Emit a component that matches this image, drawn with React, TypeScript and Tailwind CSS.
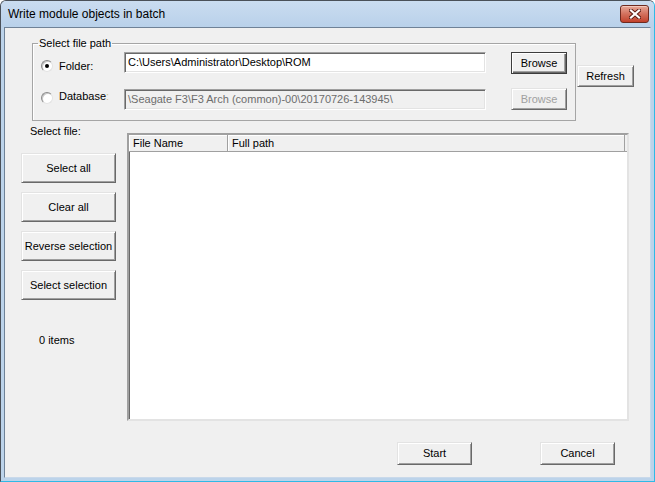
import type { ReactNode } from 'react'

function Btn({
  children,
  className = '',
  primary = false,
  disabled = false,
}: {
  children: ReactNode
  className?: string
  primary?: boolean
  disabled?: boolean
}) {
  const edge = primary
    ? 'border border-[#3c3c3c] shadow-[inset_1px_1px_0_#fff,inset_-1px_-1px_0_#696969,inset_-2px_-2px_0_#a0a0a0]'
    : 'border border-t-[#e3e3e3] border-l-[#e3e3e3] border-r-[#696969] border-b-[#696969] shadow-[inset_1px_1px_0_#fff,inset_-1px_-1px_0_#a0a0a0]'
  return (
    <button
      className={`flex items-center justify-center bg-[#f0f0f0] leading-none ${edge} ${
        disabled ? 'text-[#a0a0a0]' : 'text-black'
      } ${className}`}
    >
      {children}
    </button>
  )
}

function Radio({ checked = false }: { checked?: boolean }) {
  return (
    <span className="flex h-[12px] w-[12px] shrink-0 items-center justify-center rounded-full border border-t-[#8a8a8a] border-l-[#8a8a8a] border-r-[#e3e3e3] border-b-[#e3e3e3] bg-white shadow-[inset_1px_1px_0_#c8c8c8]">
      {checked && <span className="h-[4px] w-[4px] rounded-full bg-black" />}
    </span>
  )
}

function TextBox({ value, disabled = false }: { value: string; disabled?: boolean }) {
  return (
    <div
      className={`flex h-[21px] w-[362px] items-center border border-t-[#a0a0a0] border-l-[#a0a0a0] border-r-white border-b-white px-[3px] shadow-[inset_1px_1px_0_#696969,inset_-1px_-1px_0_#e3e3e3] ${
        disabled ? 'bg-[#f0f0f0] text-[#6d6d6d]' : 'bg-white text-black'
      }`}
    >
      <span className="whitespace-nowrap">{value}</span>
    </div>
  )
}

function CloseIcon() {
  return (
    <svg width="12" height="10" viewBox="0 0 12 10">
      <path d="M2 1.5 L10 8.5 M10 1.5 L2 8.5" stroke="#5a1a12" strokeWidth="4" strokeLinecap="square" />
      <path d="M2 1.5 L10 8.5 M10 1.5 L2 8.5" stroke="#fff" strokeWidth="2.2" strokeLinecap="square" />
    </svg>
  )
}

export default function App() {
  const sideButtons = ['Select all', 'Clear all', 'Reverse selection', 'Select selection']

  return (
    <div className="flex h-[482px] w-[655px] flex-col rounded-t-[6px] border border-[#4a5058] border-r-[#2fb9e6] border-b-[#2fb9e6] bg-[#bcd3ea] font-['Liberation_Sans',Arial,sans-serif] text-[11px] text-black">
      {/* Title bar */}
      <div className="flex h-[26px] items-center rounded-t-[5px] bg-gradient-to-b from-[#cadcf0] to-[#b9d1ea] pl-[7px] pr-[5px]">
        <span className="flex-1 text-[12px] leading-none">Write module objects in batch</span>
        <button className="flex h-[18px] w-[29px] items-center justify-center rounded-[3px] border border-[#6e2a20] bg-gradient-to-b from-[#e6a899] via-[#d3705d] to-[#c2412b] shadow-[inset_0_1px_0_#f4c9bd]">
          <CloseIcon />
        </button>
      </div>

      {/* Client area */}
      <div className="mx-[3px] mb-[3px] flex flex-1 flex-col border border-[#6f8297] border-r-[#c9d9ea] border-b-[#c9d9ea] bg-[#f0f0f0]">
        {/* Path selection */}
        <div className="ml-[27px] mt-[9px] flex items-start">
          <fieldset className="w-[544px] border border-[#a5a5a5] px-0 pb-[10px] pt-0 shadow-[inset_1px_1px_0_#fff]">
            <legend className="ml-[5px] px-[1px] leading-[13px]">Select file path</legend>
            <div className="mt-[2px] flex items-start">
              <div className="ml-[8px] mt-[8px]">
                <Radio checked />
              </div>
              <span className="ml-[6px] mt-[8px] w-[65px] leading-[13px]">Folder:</span>
              <TextBox value="C:\Users\Administrator\Desktop\ROM" />
              <Btn primary className="ml-[25px] h-[22px] w-[56px]">
                Browse
              </Btn>
            </div>
            <div className="mt-[14px] flex items-start">
              <div className="ml-[8px] mt-[4px]">
                <Radio />
              </div>
              <span className="ml-[6px] mt-[2px] w-[65px] leading-[13px]">
                Database<span className="text-[#d6c48c]">:</span>
              </span>
              <div className="mt-[1px]">
                <TextBox disabled value="\Seagate F3\F3 Arch (common)-00\20170726-143945\" />
              </div>
              <Btn disabled className="ml-[25px] h-[22px] w-[56px]">
                Browse
              </Btn>
            </div>
          </fieldset>
          <Btn className="ml-[1px] mt-[28px] h-[22px] w-[57px]">Refresh</Btn>
        </div>

        {/* File selection */}
        <div className="ml-[16px] mt-[4px] flex items-start">
          <div className="flex w-[95px] flex-col">
            <span className="ml-[9px] leading-[13px]">Select file:</span>
            <div className="mt-[15px] flex flex-col gap-[9px]">
              {sideButtons.map((label) => (
                <Btn key={label} className="h-[30px] w-[95px]">
                  {label}
                </Btn>
              ))}
            </div>
            <span className="ml-[18px] mt-[34px] leading-[13px]">0 items</span>
          </div>

          <div className="ml-[11px] mt-[8px] flex h-[288px] w-[502px] flex-col border-2 border-t-[#a0a0a0] border-l-[#a0a0a0] border-r-[#e3e3e3] border-b-[#e3e3e3] bg-white shadow-[inset_1px_1px_0_#696969]">
            <div className="flex h-[17px] border-b border-[#a0a0a0] bg-[#f0f0f0]">
              <div className="flex w-[99px] items-center border-r border-[#a0a0a0] pl-[4px] shadow-[inset_1px_1px_0_#fff]">
                File Name
              </div>
              <div className="flex w-[397px] items-center border-r border-[#a0a0a0] pl-[4px] shadow-[inset_1px_1px_0_#fff]">
                Full path
              </div>
            </div>
            <div className="flex-1" />
          </div>
        </div>

        {/* Dialog buttons */}
        <div className="ml-[392px] mt-[21px] flex gap-[68px]">
          <Btn className="h-[23px] w-[75px]">Start</Btn>
          <Btn className="h-[23px] w-[75px]">Cancel</Btn>
        </div>
      </div>
    </div>
  )
}
